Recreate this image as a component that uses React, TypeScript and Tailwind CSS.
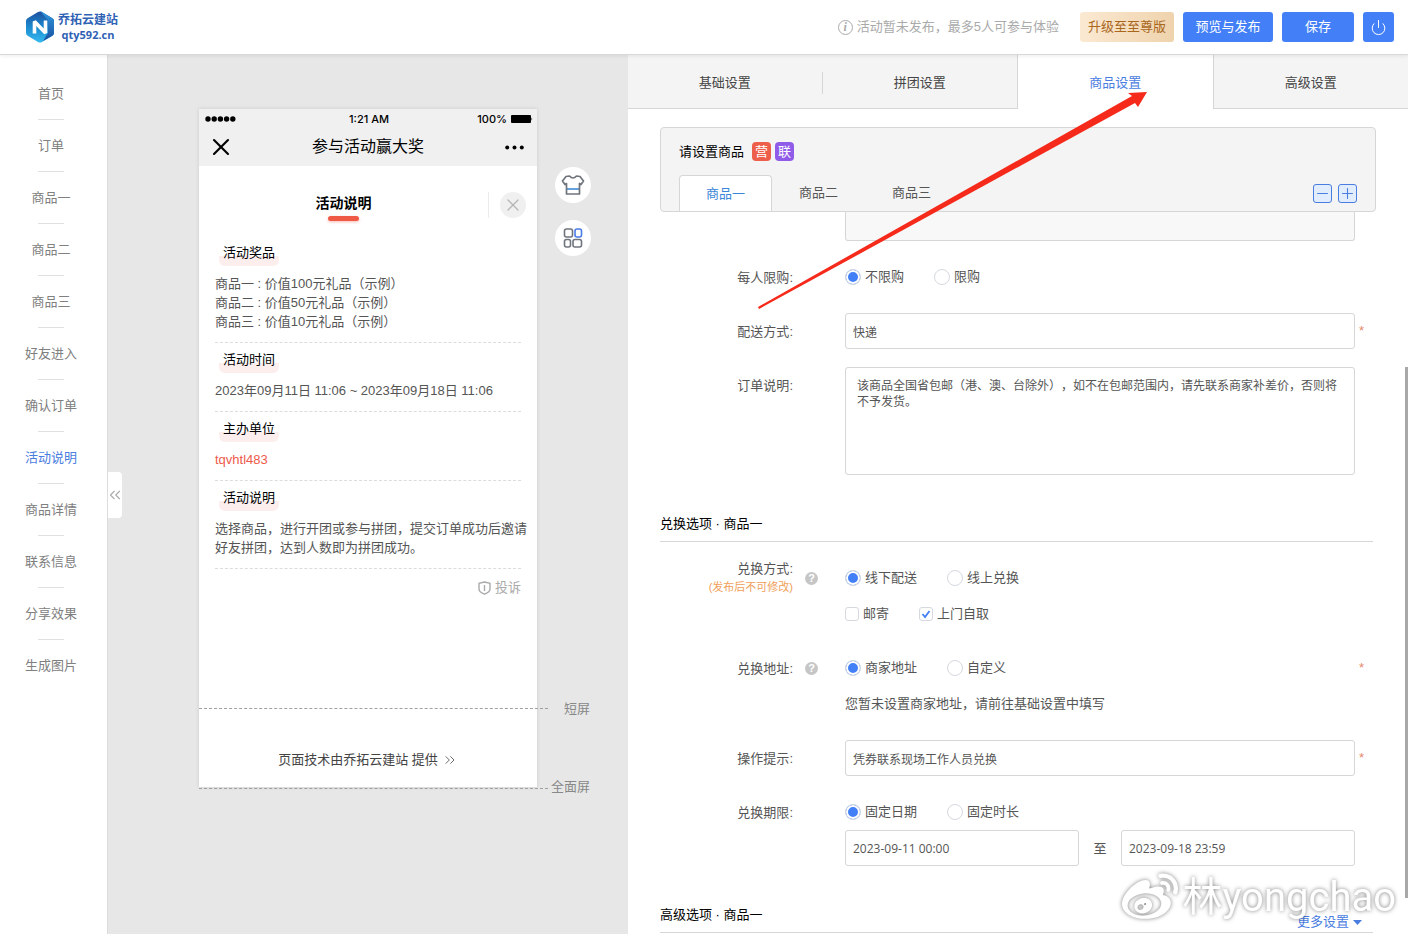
import React, { useState } from 'react';
import { ChevronsLeft, ChevronsRight, Minus, Plus, Power, X } from 'lucide-react';
import { FaWeibo } from 'react-icons/fa';

const navItems = [
  '首页', '订单', '商品一', '商品二', '商品三', '好友进入', '确认订单',
  '活动说明', '商品详情', '联系信息', '分享效果', '生成图片',
];

const settingTabs = ['基础设置', '拼团设置', '商品设置', '高级设置'];

const productTabs = ['商品一', '商品二', '商品三'];

const phoneSections = [
  { title: '活动奖品', lines: ['商品一 : 价值100元礼品（示例）', '商品二 : 价值50元礼品（示例）', '商品三 : 价值10元礼品（示例）'] },
  { title: '活动时间', lines: ['2023年09月11日 11:06 ~ 2023年09月18日 11:06'] },
  { title: '主办单位', lines: ['tqvhtl483'], accent: true },
  { title: '活动说明', lines: ['选择商品，进行开团或参与拼团，提交订单成功后邀请好友拼团，达到人数即为拼团成功。'] },
];

const Logo = () => (
  <a href="#" className="flex items-center gap-1">
    <svg width="28" height="32" viewBox="0 0 28 32">
      <defs>
        <linearGradient id="logoLeft" x1="0" y1="0" x2="0" y2="1">
          <stop offset="0" stopColor="#1d4f9e" />
          <stop offset="0.5" stopColor="#1c8ad0" />
          <stop offset="1" stopColor="#35b9ee" />
        </linearGradient>
        <linearGradient id="logoRight" x1="0" y1="0" x2="0" y2="1">
          <stop offset="0" stopColor="#2f9ae0" />
          <stop offset="1" stopColor="#1b4f9f" />
        </linearGradient>
      </defs>
      <path d="M12 1q2-1 4 0l10 6q2 1 2 3v12q0 2-2 3l-10 6q-2 1-4 0L2 25q-2-1-2-3V10q0-2 2-3z" fill="url(#logoLeft)" />
      <path d="M14 0q1 0 2 1l10 6q2 1 2 3v12q0 2-2 3l-9 5 5-8V9z" fill="url(#logoRight)" />
      <path d="M8.500 22.500V10.500l11 11.500V9.500" fill="none" stroke="#fff" strokeWidth="3.600" strokeLinejoin="bevel" />
    </svg>
    <span className="flex flex-col items-center font-bold text-[#2f62b5]">
      <span className="text-xs leading-4">乔拓云建站</span>
      <span className="font-['Open_Sans',sans-serif] text-[11px] leading-[14px]">qty592.cn</span>
    </span>
  </a>
);

const HelpIcon = () => (
  <span className="flex h-[13px] w-[13px] items-center justify-center rounded-full bg-[#c6c6c6] text-[11px] leading-[13px] font-bold text-white">?</span>
);

type RowProps = {
  label: string;
  htmlFor?: string;
  note?: string;
  help?: boolean;
  required?: boolean;
  children: React.ReactNode;
};

const FormRow = ({ label, htmlFor, note, help, required, children }: RowProps) => (
  <div className="flex items-start">
    <div className="flex h-9 w-[133px] shrink-0 flex-col items-end justify-center leading-[19px]">
      <label htmlFor={htmlFor}>{label}:</label>
      {note && <span className="text-[11px] text-[#f0a05a]">{note}</span>}
    </div>
    <div className="flex h-9 w-[52px] shrink-0 items-center pl-3">{help && <HelpIcon />}</div>
    <div className="min-w-0 flex-1">{children}</div>
    <div className="flex h-9 w-[21px] shrink-0 items-center pl-1 text-[#e8896a]">{required && '*'}</div>
  </div>
);

const RadioGroup = ({ name, options }: { name: string; options: string[] }) => (
  <div className="flex h-9 items-center gap-[30px]">
    {options.map((option, index) => (
      <label key={option} className="flex items-center gap-1">
        <input
          type="radio"
          name={name}
          defaultChecked={index === 0}
          className="h-4 w-4 appearance-none rounded-full border border-[#d5d9df] bg-white checked:bg-[#4380f7] checked:shadow-[inset_0_0_0_2px_#fff]"
        />
        {option}
      </label>
    ))}
  </div>
);

const Checkbox = ({ label, checked }: { label: string; checked?: boolean }) => (
  <label className="flex items-center gap-1">
    <span className="relative flex">
      <input type="checkbox" defaultChecked={checked} className="peer h-[14px] w-[14px] appearance-none rounded-[3px] border border-[#d5d9df] bg-white" />
      <svg viewBox="0 0 14 14" className="pointer-events-none absolute inset-0 hidden h-[14px] w-[14px] peer-checked:block">
        <path d="M3.5 7l2.5 3 4.5-6" fill="none" stroke="#4380f7" strokeWidth="1.8" />
      </svg>
    </span>
    {label}
  </label>
);

const SectionHeading = ({ children, extra }: { children: React.ReactNode; extra?: React.ReactNode }) => (
  <div className="mt-8 mr-[3px] flex h-[35px] items-center justify-between border-b border-[#d6d6d6] pr-[11px]">
    <h2 className="text-black">{children}</h2>
    {extra}
  </div>
);

const inputClass = 'h-9 w-full rounded-[3px] border border-[#d6d6d6] bg-white px-[7px] text-xs text-[#555]';

const PhonePreview = () => (
  <div className="relative mt-[54px] flex min-h-[678px] w-[338px] shrink-0 flex-col self-start bg-white shadow-[0_0_4px_rgba(0,0,0,0.12)]">
    <div className="bg-[#f0f0f0] text-black">
      <div className="grid h-[19px] grid-cols-3 items-center pr-1 pl-[6px] font-['Inter',sans-serif] text-[11px] font-medium">
        <svg width="31" height="6" viewBox="0 0 31 6">
          <circle cx="3" cy="3" r="2.7" />
          <circle cx="9.2" cy="3" r="2.7" />
          <circle cx="15.4" cy="3" r="2.7" />
          <circle cx="21.6" cy="3" r="2.7" />
          <circle cx="27.8" cy="3" r="2.7" />
        </svg>
        <span className="text-center">1:21 AM</span>
        <span className="flex items-center justify-end gap-1">
          100%
          <svg width="22" height="8" viewBox="0 0 22 8">
            <rect width="20" height="8" rx="1" />
            <path d="M20.5 2.5q1.5 1.5 0 3z" />
          </svg>
        </span>
      </div>
      <div className="flex h-[38px] items-center justify-between px-2">
        <X size={28} strokeWidth={1.8} />
        <span className="text-base">参与活动赢大奖</span>
        <span className="flex w-7 items-center justify-center">
          <svg width="19" height="5" viewBox="0 0 19 5">
            <circle cx="2.2" cy="2.5" r="2" />
            <circle cx="9.5" cy="2.5" r="2" />
            <circle cx="16.8" cy="2.5" r="2" />
          </svg>
        </span>
      </div>
    </div>

    <div className="flex h-[70px] items-center pt-2 pr-[11px] text-black">
      <div className="flex flex-1 flex-col items-center pt-1">
        <h1 className="text-sm leading-5 font-bold">活动说明</h1>
        <span className="mt-[3px] h-[5px] w-[31px] rounded-sm bg-[#ef5a45] shadow-[0_1px_3px_rgba(239,90,69,0.4)]" />
      </div>
      <div className="flex h-[26px] border-l border-[#ececec] pl-[11px]">
        <button aria-label="关闭" className="flex h-[26px] w-[26px] items-center justify-center rounded-full bg-[#f0f0f0] text-[#b5b5b5]">
          <X size={20} strokeWidth={1.5} />
        </button>
      </div>
    </div>

    <div className="px-4">
      {phoneSections.map((section) => (
        <section key={section.title} className="flex flex-col items-start gap-1 border-b border-dashed border-[#dcdcdc] pb-[11px]">
          <h3 className="flex h-[34px] items-center text-black">
            <span className="ml-1 rounded-md bg-[linear-gradient(transparent_60%,#fdeeee_60%)] px-1 py-[3px] leading-5">{section.title}</span>
          </h3>
          <div className={`-mr-2 leading-[19px] ${section.accent ? 'text-[#ee5a4a]' : 'text-[#555]'}`}>
            {section.lines.map((line) => (
              <p key={line}>{line}</p>
            ))}
          </div>
        </section>
      ))}
      <a href="#" className="flex h-[38px] items-center justify-end gap-1 text-[#aaa]">
        <svg width="13" height="14" viewBox="0 0 13 14" fill="none" stroke="#aaa" strokeWidth="1.4">
          <path d="M6.5 1L12 2.3V8q0 3-5.5 5.2Q1 11 1 8V2.3z" />
          <path d="M6.5 4v6" />
        </svg>
        投诉
      </a>
    </div>

    <div className="mt-auto flex h-[54px] items-center justify-center gap-1 text-[#444]">
      页面技术由乔拓云建站 提供
      <ChevronsRight size={16} strokeWidth={1.2} />
    </div>

    {/* Fold markers for the two screen heights */}
    <div className="absolute bottom-[78px] left-0 w-[349px] border-t border-dashed border-[#a0a0a0]" />
    <span className="absolute -right-[53px] bottom-[68px] leading-5 text-[#888]">短屏</span>
    <div className="absolute -bottom-[2px] left-0 w-[349px] border-t border-dashed border-[#a0a0a0]" />
    <span className="absolute -right-[53px] -bottom-[10px] leading-5 text-[#888]">全面屏</span>

    <div className="absolute top-[58px] left-full ml-[18px] flex flex-col gap-[17px]">
      <button aria-label="主题" className="flex h-9 w-9 items-center justify-center rounded-full bg-white">
        <svg width="24" height="22" viewBox="0 0 24 22" fill="none" strokeWidth="1.7" strokeLinejoin="round">
          <path d="M5 15h14" stroke="#4a90d9" />
          <path d="M8.500 2Q12 6 15.500 2L19 2.500l3.500 4.500-2.500 3.500-1.500-1V20h-13V9.500L4 10.500 1.500 7 5 2.500z" stroke="#70757d" />
        </svg>
      </button>
      <button aria-label="组件" className="flex h-9 w-9 items-center justify-center rounded-full bg-white">
        <svg width="20" height="20" viewBox="0 0 20 20" fill="none" stroke="#70757d" strokeWidth="1.6">
          <rect x="1.500" y="1" width="8" height="8" rx="2" />
          <rect x="12" y="1" width="6.500" height="8" rx="2" stroke="#4a7be8" />
          <rect x="1.500" y="11.500" width="6" height="7.500" rx="2" />
          <rect x="10" y="11.500" width="8.500" height="7.500" rx="2" />
        </svg>
      </button>
    </div>
  </div>
);

const App = () => {
  const [activeNav, setActiveNav] = useState('活动说明');
  const [activeTab, setActiveTab] = useState('商品设置');
  const [activeProduct, setActiveProduct] = useState('商品一');

  return (
    <div className="relative flex min-h-screen flex-col overflow-hidden bg-white font-['Liberation_Sans','Noto_Sans_CJK_SC',sans-serif] text-[13px] leading-5 text-[#555] [text-spacing-trim:space-all]">
      {/* Header */}
      <header className="relative z-10 flex h-[55px] items-center justify-between border-b border-[#d8d8d8] bg-white pr-[14px] pl-[26px] shadow-[0_1px_4px_rgba(0,0,0,0.08)]">
        <Logo />
        <div className="flex items-center gap-[9px]">
          <p className="mr-3 flex items-center gap-1 text-[#aaa]">
            <span className="flex h-[15px] w-[15px] items-center justify-center rounded-full border border-[#aaa] font-['Liberation_Serif',serif] text-xs font-bold italic">i</span>
            活动暂未发布，最多5人可参与体验
          </p>
          <button className="h-[30px] rounded-[3px] bg-gradient-to-r from-[#fbe9d2] to-[#efd3ad] px-2 text-[#a9671d]">升级至至尊版</button>
          <button className="h-[30px] w-[90px] rounded-[3px] bg-[#4380f7] text-white">预览与发布</button>
          <button className="h-[30px] w-[72px] rounded-[3px] bg-[#4380f7] text-white">保存</button>
          <button aria-label="退出" className="flex h-[30px] w-[31px] items-center justify-center rounded-[3px] bg-[#4380f7] text-white">
            <Power size={17} strokeWidth={1.4} />
          </button>
        </div>
      </header>

      <div className="flex flex-1">
        {/* Page navigation */}
        <nav className="w-[108px] shrink-0 border-r border-[#dcdcdc] pt-[13px] pr-[5px]">
          {navItems.map((item, index) => (
            <div key={item} className="flex flex-col items-center">
              {index > 0 && <span className="h-px w-[26px] bg-[#e0e0e0]" />}
              <button
                onClick={() => setActiveNav(item)}
                className={`h-[51px] ${activeNav === item ? 'text-[#4a7de0]' : 'text-[#808080]'}`}
              >
                {item}
              </button>
            </div>
          ))}
        </nav>

        {/* Phone preview */}
        <main className="relative flex min-w-0 flex-[2] justify-center bg-[#e7e7e7]">
          <button aria-label="收起" className="absolute top-1/2 left-0 flex h-[46px] w-[14px] -translate-y-1/2 items-center justify-center rounded-r-sm bg-white text-[#aaa]">
            <ChevronsLeft size={18} strokeWidth={1.5} className="shrink-0" />
          </button>
          <PhonePreview />
        </main>

        {/* Settings */}
        <aside className="relative min-w-0 flex-[3] bg-white">
          <div className="flex h-[54px]">
            {settingTabs.map((tab, index) => (
              <button
                key={tab}
                onClick={() => setActiveTab(tab)}
                className={`flex flex-1 items-center pt-[2px] ${
                  activeTab === tab ? 'border-x border-[#d6d6d6] bg-white text-[#4a7de0]' : 'border-b border-[#d6d6d6] bg-[#f4f4f4] text-[#444]'
                }`}
              >
                <span className="flex-1">{tab}</span>
                {index === 0 && <span className="h-[22px] w-px bg-[#d6d6d6]" />}
              </button>
            ))}
          </div>

          <div className="px-8 pt-[18px]">
            <div className="rounded border border-[#d6d6d6] bg-[#f4f4f4] px-[18px]">
              <div className="flex h-[47px] items-center gap-1 text-black">
                <span className="mr-1">请设置商品</span>
                <span className="flex h-[19px] w-[19px] items-center justify-center rounded-sm bg-[#ee5f4b] text-white">营</span>
                <span className="flex h-[19px] w-[19px] items-center justify-center rounded-sm bg-[#8f5be8] text-white">联</span>
              </div>
              <div className="flex items-center">
                {productTabs.map((tab) => (
                  <button
                    key={tab}
                    onClick={() => setActiveProduct(tab)}
                    className={`h-9 w-[93px] ${
                      activeProduct === tab ? 'rounded-t border border-b-0 border-[#d6d6d6] bg-white text-[#3a86d8]' : 'text-[#555]'
                    }`}
                  >
                    {tab}
                  </button>
                ))}
                <div className="ml-auto flex gap-[6px] text-[#4a7de0]">
                  <button aria-label="减少商品" className="flex h-[19px] w-[19px] items-center justify-center rounded-[3px] border border-[#4a7de0] bg-[#e1ecfd]">
                    <Minus size={17} strokeWidth={1.5} />
                  </button>
                  <button aria-label="增加商品" className="flex h-[19px] w-[19px] items-center justify-center rounded-[3px] border border-[#4a7de0] bg-[#e1ecfd]">
                    <Plus size={17} strokeWidth={1.5} />
                  </button>
                </div>
              </div>
            </div>
            <div className="mr-[21px] ml-[185px] h-[29px] rounded-b-[3px] border border-t-0 border-[#d6d6d6] bg-[#f8f8f8]" />

            <div className="mt-[18px] flex flex-col gap-[18px]">
              <FormRow label="每人限购">
                <RadioGroup name="limit" options={['不限购', '限购']} />
              </FormRow>
              <FormRow label="配送方式" htmlFor="delivery" required>
                <input id="delivery" defaultValue="快递" className={inputClass} />
              </FormRow>
              <FormRow label="订单说明" htmlFor="orderNote">
                <textarea
                  id="orderNote"
                  defaultValue="该商品全国省包邮（港、澳、台除外），如不在包邮范围内，请先联系商家补差价，否则将不予发货。"
                  className="block h-[108px] w-full resize-none rounded-[3px] border border-[#d6d6d6] px-[11px] py-[10px] text-xs leading-4"
                />
              </FormRow>
            </div>

            <SectionHeading>兑换选项 · 商品一</SectionHeading>
            <div className="mt-[18px] flex flex-col gap-[18px]">
              <FormRow label="兑换方式" note="(发布后不可修改)" help>
                <RadioGroup name="method" options={['线下配送', '线上兑换']} />
                <div className="flex h-9 items-center gap-[30px]">
                  <Checkbox label="邮寄" />
                  <Checkbox label="上门自取" checked />
                </div>
              </FormRow>
              <FormRow label="兑换地址" help required>
                <RadioGroup name="address" options={['商家地址', '自定义']} />
                <p className="leading-9">您暂未设置商家地址，请前往基础设置中填写</p>
              </FormRow>
              <FormRow label="操作提示" htmlFor="hint" required>
                <input id="hint" defaultValue="凭券联系现场工作人员兑换" className={inputClass} />
              </FormRow>
              <FormRow label="兑换期限">
                <RadioGroup name="period" options={['固定日期', '固定时长']} />
                <div className="flex items-center font-['Open_Sans','Noto_Sans_CJK_SC',sans-serif]">
                  <input aria-label="开始时间" defaultValue="2023-09-11 00:00" className={inputClass} />
                  <span className="w-[42px] shrink-0 text-center">至</span>
                  <input aria-label="结束时间" defaultValue="2023-09-18 23:59" className={inputClass} />
                </div>
              </FormRow>
            </div>

            <SectionHeading
              extra={
                <a href="#" className="flex items-center gap-1 self-end text-[#4a7de0]">
                  更多设置
                  <svg width="9" height="5" viewBox="0 0 9 5" fill="#4a7de0">
                    <path d="M0 0h9L4.500 5z" />
                  </svg>
                </a>
              }
            >
              高级选项 · 商品一
            </SectionHeading>
          </div>

          <div className="absolute right-0 bottom-9 h-[531px] w-[3px] bg-[#a8a8a8]" />

          {/* Pointer to the active settings tab */}
          <svg width="392" height="220" viewBox="0 0 392 220" className="pointer-events-none absolute top-[36px] left-[130px] z-20">
            <path d="M0 216L374 5 370 2 389 1 380 16 377 12 1 218z" fill="#f52a1b" />
          </svg>

          <div className="pointer-events-none absolute right-3 bottom-2 flex items-center gap-1 text-white drop-shadow-[0_0_2px_rgba(0,0,0,0.5)]">
            <FaWeibo size={56} />
            <span className="font-['Roboto','Noto_Sans_CJK_SC',sans-serif] text-[40px] leading-[56px]">林yongchao</span>
          </div>
        </aside>
      </div>
    </div>
  );
};

export default App;
